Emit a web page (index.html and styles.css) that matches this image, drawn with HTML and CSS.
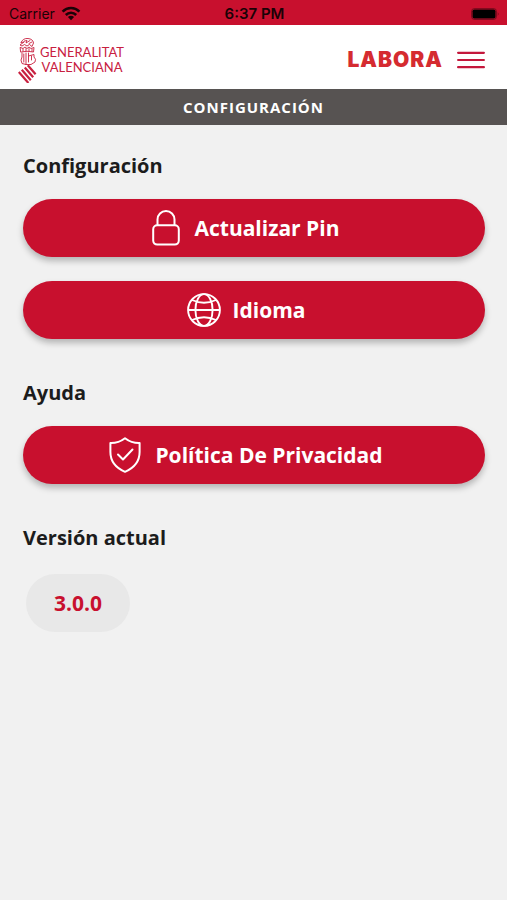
FILE: index.html
```html
<!DOCTYPE html>
<html lang="es">
<head>
<meta charset="utf-8">
<meta name="viewport" content="width=device-width, initial-scale=1">
<title>Configuración</title>
<link rel="stylesheet" href="styles.css">
</head>
<body>
<div class="status">
  <div class="status-side">
    <span>Carrier</span>
    <svg width="20" height="15" viewBox="0 0 20 15" fill="none" stroke="currentColor" stroke-width="2.6" aria-hidden="true">
      <path d="M1.6 5.6C6.4 .8 13.6 .8 18.4 5.6"/>
      <path d="M4.8 9C7.8 6 12.2 6 15.2 9"/>
      <path d="M10 14.2 6.9 11Q10 8.4 13.1 11Z" fill="currentColor" stroke="none"/>
    </svg>
  </div>
  <span class="status-time">6:37 PM</span>
  <div class="status-side status-end">
    <svg width="30" height="14" viewBox="0 0 30 14" aria-hidden="true">
      <rect x="1.5" y="1.5" width="25" height="11" rx="3" fill="none" stroke="#000" stroke-opacity=".35"/>
      <rect x="2.5" y="2.5" width="23" height="9" rx="1.8"/>
      <path d="M27.8 5q1.6 2 0 4z" fill-opacity=".5"/>
    </svg>
  </div>
</div>
<header class="header">
  <a class="brand" href="#" aria-label="Generalitat Valenciana">
    <svg width="20" height="46" viewBox="0 0 20 46" fill="none" stroke="currentColor" stroke-width=".9" stroke-linecap="round" stroke-linejoin="round" aria-hidden="true">
      <path d="M3 5.5Q5 1 10 1.5Q15 2 15.5 6L14 9.5L11.5 7.5L9 9L6.5 7.5L4 9L2 8L6 5Z"/>
      <path d="M6.5 4L9 3.5L8 6L12 3.5M11 6.5L14 5"/>
      <path d="M2.5 10.5L5 11.5L7 10L9 11.5L11 10L13 11.5L16 10.5L15.5 15Q9 13.5 3 15Z"/>
      <path d="M5 12V14.3M8 11.5V14M11 11.5V14M14 12V14.5"/>
      <path d="M4 16V20Q2 23 4 26.5L8 27.5V16M10.5 16V19L16 17.5V20Q18.5 22 17 25L13 27.5L8 27.5M13.5 19V23M5.8 17V25M10.5 19V25"/>
      <path d="M9.8 28.2 17.6 37.2M6.8 30.5 15.2 40.2M3.8 32.8 12.8 43.2M.8 35.1 10.4 46" stroke-width="2.2" stroke-linecap="butt"/>
    </svg>
    <span class="brand-name">GENERALITAT<br>VALENCIANA</span>
  </a>
  <div class="header-end">
    <span class="labora">LABORA</span>
    <button class="menu" type="button" aria-label="Menú">
      <svg width="28" height="18" viewBox="0 0 28 18" stroke="currentColor" stroke-width="2.2" stroke-linecap="round" aria-hidden="true">
        <path d="M1.1 1.8H26.9M1.1 9H26.9M1.1 16.2H26.9"/>
      </svg>
    </button>
  </div>
</header>
<h1 class="title">CONFIGURACIÓN</h1>
<main class="content">
  <section>
    <h2>Configuración</h2>
    <div class="actions">
      <button class="action" type="button">
        <svg width="28" height="36" viewBox="0 0 28 36" fill="none" stroke="currentColor" stroke-width="2" aria-hidden="true">
          <rect x="1.2" y="15.2" width="25.6" height="19.4" rx="4"/>
          <path d="M5.5 15.2V9.5a8.5 8.5 0 0 1 17 0V15.2"/>
        </svg>
        <span>Actualizar Pin</span>
      </button>
      <button class="action action-tight" type="button">
        <svg width="34" height="34" viewBox="0 0 34 34" fill="none" stroke="currentColor" stroke-width="1.9" aria-hidden="true">
          <circle cx="17" cy="17" r="15.9"/>
          <ellipse cx="17" cy="17" rx="8.6" ry="15.9"/>
          <path d="M1 17H33M5 7Q17 12.5 29 7M5 27Q17 21.5 29 27"/>
        </svg>
        <span>Idioma</span>
      </button>
    </div>
  </section>
  <section>
    <h2>Ayuda</h2>
    <div class="actions">
      <button class="action" type="button">
        <svg width="32" height="36" viewBox="0 0 32 36" fill="none" stroke="currentColor" stroke-width="2" stroke-linejoin="round" aria-hidden="true">
          <path d="M16 1.2Q9.5 6.2 1.4 6V15C1.4 24 6 30.5 16 34.8C26 30.5 30.6 24 30.6 15V6Q22.5 6.2 16 1.2Z"/>
          <path d="M9 17.5 14 22.5 23.5 12.5" stroke-linecap="round"/>
        </svg>
        <span>Política De Privacidad</span>
      </button>
    </div>
  </section>
  <section>
    <h2>Versión actual</h2>
    <p class="version">3.0.0</p>
  </section>
</main>
</body>
</html>
```
FILE: styles.css
```css
* {
  box-sizing: border-box;
}

body {
  margin: 0;
  min-height: 100vh;
  background: #f1f1f1;
  color: #1c1c1c;
  font-family: "Open Sans", sans-serif;
}

button {
  border: 0;
  font: inherit;
  cursor: pointer;
}

svg {
  display: block;
  flex: none;
}

.status {
  display: flex;
  align-items: center;
  height: 25px;
  padding: 2px 7px 0 9px;
  background: #c8102e;
  color: #1a0206;
  font: 14px/20px Inter, sans-serif;
}

.status-side {
  display: flex;
  flex: 1;
  align-items: center;
  gap: 6px;
}

.status-end {
  justify-content: flex-end;
}

.status-time {
  font-size: 15px;
  font-weight: 600;
}

.header {
  display: flex;
  align-items: center;
  justify-content: space-between;
  height: 64px;
  padding: 6px 22px 0 18px;
  background: #fff;
}

.brand {
  display: flex;
  align-items: center;
  gap: 2px;
  color: #c8203f;
  text-decoration: none;
}

.brand-name {
  font: 13px/15px Lato, sans-serif;
  text-align: center;
}

.header-end {
  display: flex;
  align-items: center;
  gap: 14px;
}

.labora {
  color: #d52b30;
  font: 900 21px/24px Inter, sans-serif;
  letter-spacing: 1px;
}

.menu {
  padding: 0;
  background: none;
  color: #c4183c;
}

.title {
  margin: 0;
  padding: 8px 0;
  background: #575352;
  color: #fff;
  font-size: 15px;
  line-height: 20px;
  font-weight: 700;
  letter-spacing: 1px;
  text-align: center;
}

.content {
  display: grid;
  gap: 40px;
  padding: 27px 22px 40px 23px;
}

h2 {
  margin: 0 0 19px;
  font-size: 20px;
  line-height: 28px;
  font-weight: 700;
}

.actions {
  display: grid;
  gap: 24px;
}

.action {
  display: flex;
  align-items: center;
  justify-content: center;
  gap: 14px;
  width: 100%;
  min-height: 58px;
  padding: 8px 40px 8px 24px;
  border-radius: 30px;
  background: #c8102e;
  box-shadow: 0 4px 6px rgba(0, 0, 0, 0.25);
  color: #fff;
  font-size: 21px;
  line-height: 28px;
  font-weight: 700;
}

.action-tight {
  gap: 12px;
}

.version {
  width: fit-content;
  margin: 22px 3px 0;
  padding: 15px 28px;
  border-radius: 30px;
  background: #e8e8e8;
  color: #c8102e;
  font-size: 21px;
  line-height: 28px;
  font-weight: 700;
}
```
